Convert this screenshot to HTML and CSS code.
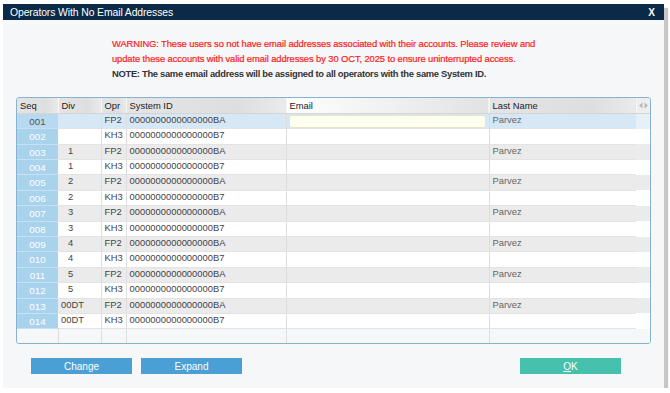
FILE: index.html
```html
<!DOCTYPE html>
<html lang="en">
<head>
  <meta charset="UTF-8" />
  <title>Operators With No Email Addresses</title>
  <link rel="stylesheet" href="styles.css">
</head>
<body>
  <div class="dialog">
    <div class="titlebar">
      <span class="title">Operators With No Email Addresses</span>
      <span class="close">X</span>
    </div>

    <div class="message">
      <p class="warn">WARNING: These users so not have email addresses associated with their accounts. Please review and</p>
      <p class="warn">update these accounts with valid email addresses by 30 OCT, 2025 to ensure uninterrupted access.</p>
      <p class="note">NOTE: The same email address will be assigned to all operators with the same System ID.</p>
    </div>

    <div class="grid-wrap">
      <table class="grid">
        <colgroup>
          <col class="c-seq"><col class="c-div"><col class="c-opr"><col class="c-sys">
          <col class="c-email"><col class="c-last"><col class="c-end">
        </colgroup>
        <thead>
          <tr>
            <th>Seq</th><th>Div</th><th>Opr</th><th>System ID</th><th class="active">Email</th><th>Last Name</th>
            <th class="resize">
              <svg width="9" height="7" viewBox="0 0 9 7"><path d="M0 3.5L3.5 0.5V6.5Z M9 3.5L5.5 0.5V6.5Z" fill="#b9b9b9"/></svg>
            </th>
          </tr>
        </thead>
        <tbody id="rows"></tbody>
      </table>
    </div>

    <div class="actions">
      <button class="btn blue">Change</button>
      <button class="btn blue">Expand</button>
      <span class="spacer"></span>
      <button class="btn teal"><u>O</u>K</button>
    </div>
  </div>

  <script>
    // operators missing an email address
    const divs = ["", "1", "2", "3", "4", "5", "00DT"];
    const rowsEl = document.getElementById("rows");
    let html = "";
    for (let i = 0; i < 14; i++) {
      const d = divs[Math.floor(i / 2)];
      const fp = i % 2 === 0;
      const seq = String(i + 1).padStart(3, "0");
      const cls = (fp ? "odd" : "even") + (i === 0 ? " selected" : "");
      html += `<tr class="${cls}">
        <td class="seq">${seq}</td>
        <td class="${d.length < 2 ? "num" : ""}">${d}</td>
        <td>${fp ? "FP2" : "KH3"}</td>
        <td>${fp ? "0000000000000000BA" : "0000000000000000B7"}</td>
        <td class="email">${i === 0 ? '<div class="field"></div>' : ""}</td>
        <td class="last">${fp ? "Parvez" : ""}</td>
        <td class="end"></td>
      </tr>`;
    }
    html += `<tr class="blank"><td class="seq"></td><td></td><td></td><td></td><td></td><td class="last"></td><td class="end"></td></tr>`;
    rowsEl.innerHTML = html;
  </script>
</body>
</html>
```

FILE: styles.css
```css
body {
  margin: 0;
  background: #ffffff;
  font-family: "Liberation Sans", Arial, sans-serif;
}

.dialog {
  margin: 4px 0 0 3px;
  width: 661px;
  height: 384px;
  background: #f5f7f9;
  box-shadow: 4px 4px 1px rgba(0, 0, 0, 0.22);
  display: flex;
  flex-direction: column;
}

.titlebar {
  height: 16px;
  background: #0b2a47;
  color: #ffffff;
  display: flex;
  align-items: center;
  justify-content: space-between;
  padding: 0 9px 0 7px;
}

.title {
  font-size: 10.4px;
  letter-spacing: -0.1px;
}

.close {
  font-size: 10px;
  font-weight: bold;
}

.message {
  margin: 16px 0 0 109px;
}

.message p {
  margin: 0;
  height: 15px;
  line-height: 15px;
  font-size: 9.4px;
}

.warn {
  color: #ff1a1a;
  letter-spacing: -0.1px;
  -webkit-text-stroke: 0.2px #ff1a1a;
}

.note {
  color: #333333;
  font-weight: bold;
  letter-spacing: -0.3px;
}

.grid-wrap {
  margin: 16px 0 0 13px;
  width: 633px;
  height: 245px;
  border: 1px solid #86b3d4;
  border-radius: 3px;
  background: #f5f7f9;
  overflow: hidden;
}

.grid {
  border-collapse: collapse;
  table-layout: fixed;
  width: 633px;
  font-size: 9.4px;
  color: #444444;
}

.c-seq { width: 41px; }
.c-div { width: 43px; }
.c-opr { width: 25px; }
.c-sys { width: 160px; }
.c-email { width: 203px; }
.c-last { width: 147px; }
.c-end { width: 14px; }

.grid th {
  height: 13px;
  padding: 0 0 0 3px;
  text-align: left;
  font-weight: normal;
  color: #222222;
  background: linear-gradient(to right, #e4e4e4, #dedede 70%, #eaeaea);
  border-right: 1px solid #f7f7f7;
  border-bottom: 1px solid #d4d4d4;
}

.grid th.active {
  background: linear-gradient(to right, #ffffff, #e2e2e2);
}

.grid th.resize {
  background: #eeeeee;
  padding: 0;
  text-align: center;
  border-right: none;
}

.grid tr {
  height: 15.4px;
}

.grid td {
  height: 14.4px;
  padding: 0 0 0 3px;
  border-right: 1px solid #dddddd;
  border-bottom: 1px solid #e3e3e3;
  white-space: nowrap;
  overflow: hidden;
  vertical-align: top;
  line-height: 12px;
}

.grid tr.odd td { background: #ebebeb; }
.grid tr.even td { background: #ffffff; }
.grid tr.selected td { background: #d6e8f6; }
.grid tr.blank td { background: #f5f7f9; border-bottom: none; }
.grid tr.blank { height: 16px; }

.grid td.seq {
  background: #a9d2ec !important;
  color: #ffffff;
  text-align: center;
  padding: 2px 0 0;
  height: 12.4px;
  font-size: 9.8px;
  line-height: 12px;
  border-right: none;
  border-bottom: 1px solid #c5e1f3;
}

.grid tr.selected td.seq {
  background: #b7daf0 !important;
  color: #555555;
}

.grid tr.blank td.seq {
  background: #f5f7f9 !important;
  border-right: 1px solid #dddddd;
}

.grid td.num {
  padding-left: 10px;
}

.grid td.last {
  color: #666666;
  border-right: none;
}

.grid td.end {
  border-right: none;
  border-bottom: none;
}

.grid tr.selected td.end {
  background: #e6f0f8;
}

.grid td.email {
  padding: 0 3px 0 2px;
}

.field {
  margin-top: 1px;
  height: 11px;
  background: #fffff0;
  border: 1px solid #e6e3c8;
  border-radius: 3px;
}

.actions {
  display: flex;
  gap: 9px;
  margin: 14px 0 0 28px;
  width: 590px;
}

.spacer {
  flex: 1;
}

.btn {
  width: 101px;
  height: 16px;
  border: none;
  padding: 0;
  color: #ffffff;
  font-family: "Liberation Sans", Arial, sans-serif;
  font-size: 10px;
  cursor: pointer;
}

.blue {
  background: #4a9fd5;
}

.teal {
  background: #45c1ad;
}
```
